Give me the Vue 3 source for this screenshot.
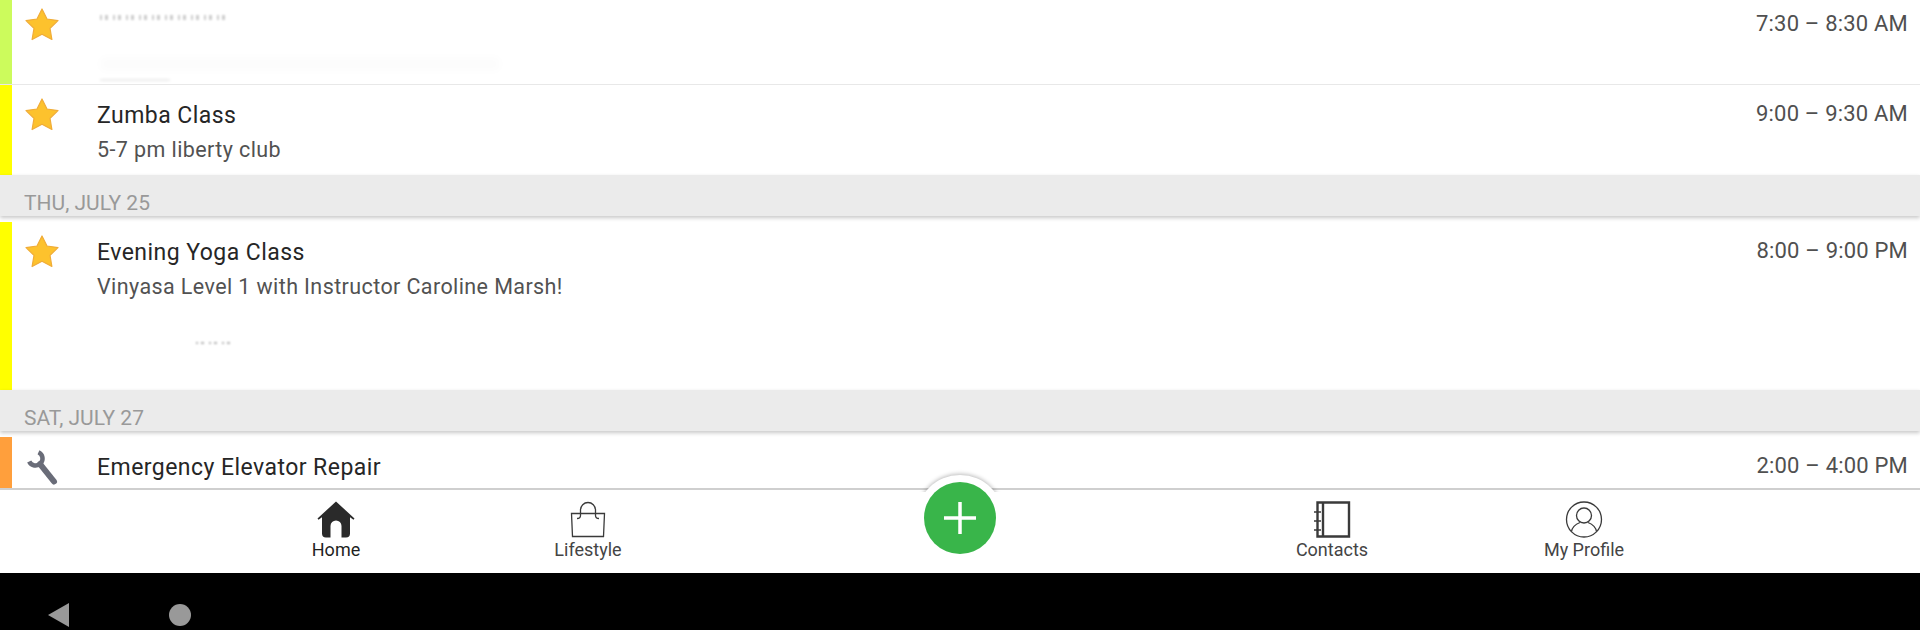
<script setup>
const navLeft = [
  { id: 'home', label: 'Home', active: true },
  { id: 'bag', label: 'Lifestyle' }
]
const navRight = [
  { id: 'book', label: 'Contacts' },
  { id: 'user', label: 'My Profile' }
]
</script>

<template>
  <div class="app">
    <main class="list">
      <section class="row row-first">
        <i class="bar lime"></i>
        <svg class="ico" viewBox="0 0 34 34"><path class="star" d="M17 1l5 10 11 1.600-8 7.800 1.900 11.100L17 26.300 7.100 31.500 9 20.400 1 12.600 12 11z"/></svg>
        <div class="body">
          <div class="ghost g1"></div>
          <div class="ghost g2"></div>
          <div class="ghost g3"></div>
        </div>
        <div class="time">7:30 – 8:30 AM</div>
      </section>
      <section class="row">
        <i class="bar yellow"></i>
        <svg class="ico" viewBox="0 0 34 34"><path class="star" d="M17 1l5 10 11 1.600-8 7.800 1.900 11.100L17 26.300 7.100 31.500 9 20.400 1 12.600 12 11z"/></svg>
        <div class="body">
          <div class="title">Zumba Class</div>
          <div class="sub">5-7 pm liberty club</div>
        </div>
        <div class="time">9:00 – 9:30 AM</div>
      </section>
      <header class="day">THU, JULY 25</header>
      <section class="row row-tall">
        <i class="bar yellow"></i>
        <svg class="ico" viewBox="0 0 34 34"><path class="star" d="M17 1l5 10 11 1.600-8 7.800 1.900 11.100L17 26.300 7.100 31.500 9 20.400 1 12.600 12 11z"/></svg>
        <div class="body">
          <div class="title">Evening Yoga Class</div>
          <div class="sub">Vinyasa Level 1 with Instructor Caroline Marsh!</div>
          <div class="ghost g4"></div>
        </div>
        <div class="time">8:00 – 9:00 PM</div>
      </section>
      <header class="day">SAT, JULY 27</header>
      <section class="row row-cut">
        <i class="bar orange"></i>
        <svg class="ico wrench" viewBox="0 0 32 36">
          <path class="w-head" d="M12.500 3.200A7 7 0 1 1 3.200 12.500"/>
          <path class="w-shaft" d="M14 15L28 32.500"/>
        </svg>
        <div class="body">
          <div class="title">Emergency Elevator Repair</div>
        </div>
        <div class="time">2:00 – 4:00 PM</div>
      </section>
    </main>

    <nav class="nav">
      <div class="halo"></div>
      <button class="fab" aria-label="Add">
        <svg viewBox="0 0 32 32" class="plus"><path d="M16 0v32M0 16h32"/></svg>
      </button>

      <div v-for="item in navLeft" :key="item.id" class="tab" :class="{ active: item.active }">
        <svg v-if="item.id === 'home'" class="tab-ico" viewBox="0 0 38 37">
          <path class="solid" d="M19 .5L37.500 17.500 36.500 18.800 33 16.200V32.500a4 4 0 0 1-4 4H24.500V25a5.500 5.500 0 0 0-11 0V36.500H9a4 4 0 0 1-4-4V16.200L1.500 18.800.5 17.500z"/>
        </svg>
        <svg v-else class="tab-ico" viewBox="0 0 38 37">
          <path class="thin" d="M2.500 12.500H35.500L34.500 35.500H3.500z"/>
          <path class="thin" d="M8 17.500c2.500 0 3.500-1 3.500-3V9a7.500 7.500 0 0 1 15 0v5.500c0 2 1 3 3.500 3"/>
        </svg>
        <span>{{ item.label }}</span>
      </div>

      <div class="gap"></div>

      <div v-for="item in navRight" :key="item.id" class="tab">
        <svg v-if="item.id === 'book'" class="tab-ico" viewBox="0 0 38 37">
          <path class="thick" d="M4.500 1.500H36V35.500H4.500zM10 1.500V35.500"/>
          <path class="thin" d="M1 11H8M1 20H8M1 29H8"/>
        </svg>
        <svg v-else class="tab-ico" viewBox="0 0 38 37">
          <circle class="thin" cx="19" cy="18.500" r="17.500"/>
          <circle class="thin" cx="19" cy="14.500" r="7.500"/>
          <path class="thin" d="M6.500 30.500c1-6 6-8 8.500-9M31.500 30.500c-1-6-6-8-8.500-9"/>
        </svg>
        <span>{{ item.label }}</span>
      </div>
    </nav>

    <footer class="sys">
      <svg class="back" viewBox="0 0 21 24"><path d="M21 0V24L0 12z"/></svg>
      <i class="dot"></i>
    </footer>
  </div>
</template>

<style>
html, body { margin: 0; background: #fff; }
</style>

<style scoped>
.app {
  width: 1920px;
  height: 630px;
  display: flex;
  flex-direction: column;
  overflow: hidden;
  font-family: Roboto, "Liberation Sans", sans-serif;
  background: #fff;
}
.list {
  height: 488px;
  overflow: hidden;
  flex: none;
}
.row {
  display: flex;
  align-items: flex-start;
  height: 90px;
  position: relative;
  background: #fff;
}
.row-first {
  margin-top: -5px;
  height: 89px;
  border-bottom: 1px solid #e8e8e8;
}
.row-tall { height: 168px; }
.row-cut { height: 90px; }
.bar { width: 12px; height: 100%; flex: none; }
.lime { background: #ccfb5c; }
.yellow { background: #ffff00; }
.orange { background: #ff9f3c; }
.ico {
  width: 34px;
  height: 34px;
  margin: 13px 0 0 13px;
  flex: none;
  overflow: visible;
}
.star { fill: #fdc22d; stroke: #f0ac38; stroke-width: 1.200; stroke-linejoin: round; }
.wrench { width: 32px; height: 36px; margin: 12px 0 0 14px; }
.w-head { fill: none; stroke: #696c78; stroke-width: 4.500; }
.w-shaft { fill: none; stroke: #696c78; stroke-width: 6; stroke-linecap: round; }
.body {
  flex: 1;
  margin-left: 38px;
  padding-top: 16px;
  position: relative;
}
.row-cut .wrench + .body { margin-left: 39px; }
.title {
  font-size: 23px;
  font-weight: 400;
  line-height: 30px;
  letter-spacing: .45px;
  color: #262626;
}
.sub {
  font-size: 21.500px;
  line-height: 30px;
  letter-spacing: .4px;
  margin-top: 3.500px;
  color: #525252;
}
.time {
  font-size: 22px;
  line-height: 30px;
  padding: 13.500px 12px 0 0;
  color: #505050;
  letter-spacing: .2px;
}
.day {
  height: 41px;
  margin-bottom: 6px;
  box-sizing: border-box;
  padding: 16px 0 0 24px;
  font-size: 21px;
  line-height: 24px;
  color: #999;
  background: #ebebeb;
  box-shadow: 0 2px 4px rgba(0, 0, 0, .22);
  position: relative;
}
.ghost {
  position: absolute;
  filter: blur(1px);
  background: repeating-linear-gradient(90deg, #000 0 2px, transparent 2px 5px, #000 5px 8px, transparent 8px 13px);
}
.g1 { left: 3px; top: 20px; width: 130px; height: 5px; opacity: .2; }
.g2 { left: 3px; top: 62px; width: 400px; height: 14px; opacity: .012; filter: blur(4px); background: #000; }
.g3 { left: 3px; top: 84px; width: 70px; height: 2px; opacity: .08; filter: blur(1.500px); background: #000; }
.g4 { left: 99px; top: 120px; width: 36px; height: 2px; opacity: .3; }
.nav {
  flex: none;
  height: 85px;
  box-sizing: border-box;
  border-top: 2px solid #cfcfcf;
  position: relative;
  background: #fff;
  display: grid;
  grid-template-columns: 252px 252px 492px 252px 252px;
  justify-content: center;
}
.tab {
  display: flex;
  flex-direction: column;
  align-items: center;
  padding-top: 11px;
  color: #444;
  font-size: 18px;
  line-height: 22px;
}
.tab.active { color: #1f1f1f; }
.tab span { margin-top: 1px; }
.tab-ico { width: 38px; height: 37px; display: block; }
.solid { fill: #2a2a2a; }
.thin { fill: none; stroke: #3a3a3a; stroke-width: 1.300; }
.thick { fill: none; stroke: #3a3a3a; stroke-width: 2.400; }
.halo {
  position: absolute;
  left: 916px;
  top: -15px;
  width: 88px;
  height: 88px;
  border-radius: 50%;
  background: #fff;
  box-shadow: 0 -1px 4px rgba(0, 0, 0, .28);
  clip-path: inset(-8px -8px 71px -8px);
}
.fab {
  position: absolute;
  left: 924px;
  top: -8px;
  width: 72px;
  height: 72px;
  border: 0;
  padding: 0;
  border-radius: 50%;
  background: #39b54a;
  display: flex;
  align-items: center;
  justify-content: center;
}
.plus { width: 32px; height: 32px; display: block; }
.plus path { stroke: #fff; stroke-width: 3.500; fill: none; }
.sys {
  flex: 1;
  background: #000;
  display: flex;
  align-items: flex-start;
  padding: 30px 0 0 48px;
  gap: 100px;
}
.back { width: 21px; height: 24px; display: block; }
.back path { fill: #999; }
.dot { width: 22px; height: 22px; border-radius: 50%; background: #999; margin-top: 1px; }
</style>
